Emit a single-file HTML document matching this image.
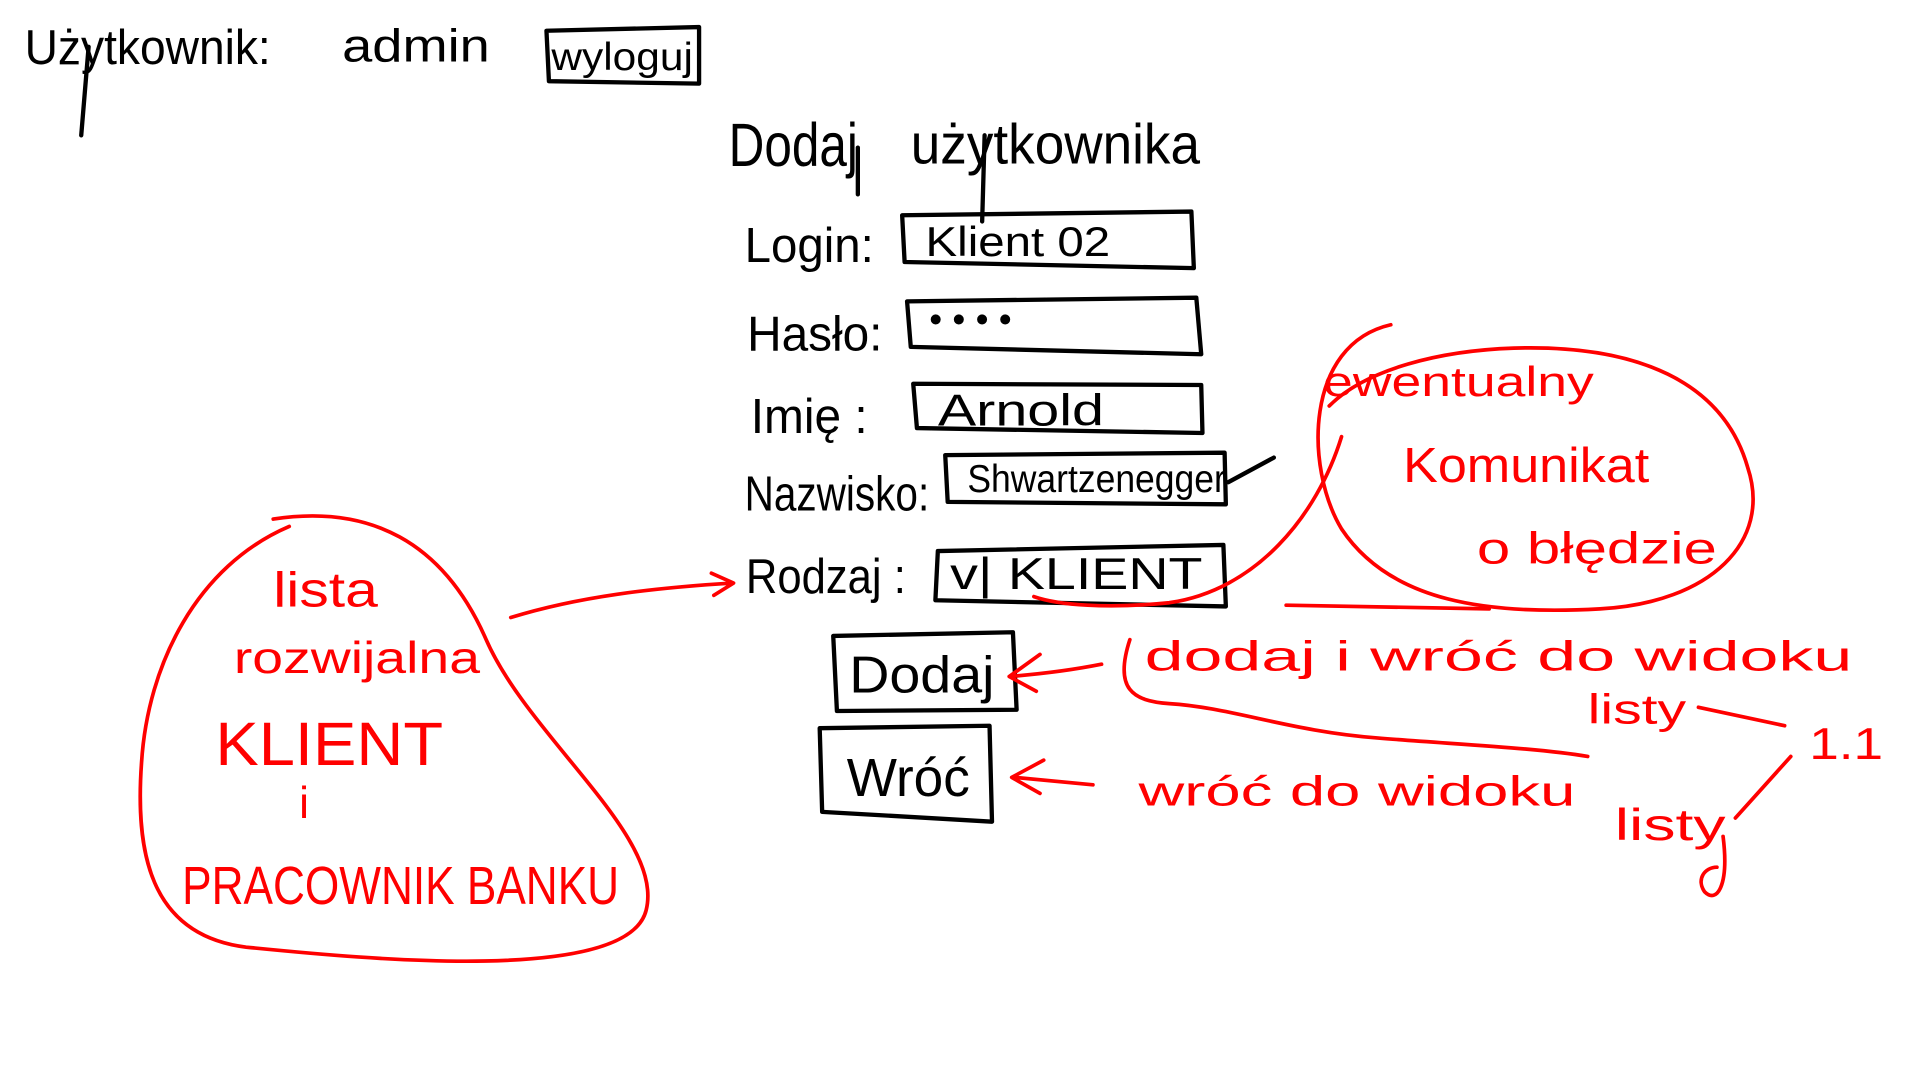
<!DOCTYPE html>
<html><head><meta charset="utf-8"><style>
html,body{margin:0;padding:0;background:#fff;width:1920px;height:1080px;overflow:hidden}
svg{display:block}
text{font-family:"Liberation Sans Narrow","Liberation Sans",sans-serif}
.k{fill:#000}.r{fill:#f00}
.ks{fill:none;stroke:#000;stroke-width:3.5;stroke-linecap:round;stroke-linejoin:round}
.rs{fill:none;stroke:#f00;stroke-width:3;stroke-linecap:round;stroke-linejoin:round}
</style></head><body>
<svg width="1920" height="1080" viewBox="0 0 1560 878" preserveAspectRatio="none">
<!-- header -->
<text x="20" y="52" class="k" font-size="40" textLength="200" lengthAdjust="spacingAndGlyphs">Użytkownik:</text>
<path class="ks" d="M72 38 L66 110"/>
<text x="278" y="50" class="k" font-size="38" textLength="120" lengthAdjust="spacingAndGlyphs">admin</text>
<path class="ks" d="M444 25 L568 22 L568 68 L446 66 Z"/>
<text x="448" y="57" class="k" font-size="32" textLength="115" lengthAdjust="spacingAndGlyphs">wyloguj</text>
<!-- title -->
<text x="592" y="135" class="k" font-size="50" textLength="105" lengthAdjust="spacingAndGlyphs">Dodaj</text>
<path class="ks" d="M697 120 L697 158"/>
<text x="740" y="133" class="k" font-size="46" textLength="235" lengthAdjust="spacingAndGlyphs">użytkownika</text>
<path class="ks" d="M800 110 L798 180"/>
<!-- fields -->
<text x="605" y="213" class="k" font-size="40" textLength="105" lengthAdjust="spacingAndGlyphs">Login:</text>
<path class="ks" d="M733 175 L968 172 L970 218 L735 213 Z"/>
<text x="752" y="208" class="k" font-size="34" textLength="150" lengthAdjust="spacingAndGlyphs">Klient 02</text>
<text x="607" y="285" class="k" font-size="40" textLength="110" lengthAdjust="spacingAndGlyphs">Hasło:</text>
<path class="ks" d="M737 245 L972 242 L976 288 L740 282 Z"/>
<text x="755" y="270" class="k" font-size="30">• • • •</text>
<text x="610" y="352" class="k" font-size="40" textLength="95" lengthAdjust="spacingAndGlyphs">Imię :</text>
<path class="ks" d="M742 312 L976 313 L977 352 L745 348 Z"/>
<text x="762" y="346" class="k" font-size="36" textLength="135" lengthAdjust="spacingAndGlyphs">Arnold</text>
<text x="605" y="415" class="k" font-size="40" textLength="150" lengthAdjust="spacingAndGlyphs">Nazwisko:</text>
<path class="ks" d="M768 370 L995 368 L996 410 L770 408 Z"/>
<text x="786" y="400" class="k" font-size="32" textLength="210" lengthAdjust="spacingAndGlyphs">Shwartzenegger</text>
<path class="ks" d="M998 392 L1035 372"/>
<text x="606" y="482" class="k" font-size="40" textLength="130" lengthAdjust="spacingAndGlyphs">Rodzaj :</text>
<path class="ks" d="M762 448 L994 443 L996 493 L760 488 Z"/>
<text x="772" y="479" class="k" font-size="36" textLength="205" lengthAdjust="spacingAndGlyphs">v| KLIENT</text>
<!-- buttons -->
<path class="ks" d="M677 517 L823 514 L826 577 L680 578 Z"/>
<text x="690" y="563" class="k" font-size="42" textLength="118" lengthAdjust="spacingAndGlyphs">Dodaj</text>
<path class="ks" d="M666 592 L804 590 L806 668 L668 660 Z"/>
<text x="688" y="647" class="k" font-size="44" textLength="100" lengthAdjust="spacingAndGlyphs">Wróć</text>
<!-- left bubble -->
<path class="rs" d="M222 422 C300 410 360 440 395 520 C430 600 540 680 525 740 C510 800 300 780 200 770 C120 760 110 690 115 620 C120 540 160 460 235 428"/>
<text x="222" y="493" class="r" font-size="40" textLength="85" lengthAdjust="spacingAndGlyphs">lista</text>
<text x="190" y="547" class="r" font-size="36" textLength="200" lengthAdjust="spacingAndGlyphs">rozwijalna</text>
<text x="175" y="622" class="r" font-size="50" textLength="185" lengthAdjust="spacingAndGlyphs">KLIENT</text>
<text x="243" y="665" class="r" font-size="36">i</text>
<text x="148" y="735" class="r" font-size="44" textLength="355" lengthAdjust="spacingAndGlyphs">PRACOWNIK BANKU</text>
<path class="rs" d="M415 502 C470 485 530 478 595 474 M578 466 L596 474 L580 484"/>
<!-- right bubble -->
<path class="rs" d="M1130 264 C1060 280 1060 380 1090 430 C1130 490 1210 500 1300 495 C1390 490 1440 440 1420 380 C1400 310 1330 280 1230 283 C1170 285 1110 300 1080 330"/>
<text x="1075" y="322" class="r" font-size="34" textLength="220" lengthAdjust="spacingAndGlyphs">ewentualny</text>
<text x="1140" y="392" class="r" font-size="40" textLength="200" lengthAdjust="spacingAndGlyphs">Komunikat</text>
<text x="1200" y="458" class="r" font-size="36" textLength="195" lengthAdjust="spacingAndGlyphs">o  błędzie</text>
<path class="rs" d="M1090 355 C1070 420 1020 480 950 490 C900 495 860 492 840 485"/>
<!-- annotations -->
<path class="rs" d="M895 540 C870 545 845 548 820 550 M845 532 L820 550 L842 562"/>
<path class="rs" d="M918 520 C905 560 920 570 950 572 C1000 575 1050 595 1120 600 C1180 605 1250 608 1290 615"/>
<path class="rs" d="M1045 492 L1210 495"/>
<text x="930" y="545" class="r" font-size="34" textLength="575" lengthAdjust="spacingAndGlyphs">dodaj  i  wróć  do  widoku</text>
<text x="1290" y="588" class="r" font-size="34" textLength="80" lengthAdjust="spacingAndGlyphs">listy</text>
<path class="rs" d="M1380 575 L1450 590"/>
<text x="1470" y="617" class="r" font-size="36" textLength="60" lengthAdjust="spacingAndGlyphs">1.1</text>
<path class="rs" d="M888 638 L825 632 M848 618 L822 632 L845 645"/>
<text x="925" y="655" class="r" font-size="34" textLength="355" lengthAdjust="spacingAndGlyphs">wróć   do  widoku</text>
<text x="1312" y="683" class="r" font-size="36" textLength="90" lengthAdjust="spacingAndGlyphs">listy</text>
<path class="rs" d="M1410 665 L1455 615 M1400 680 C1405 720 1395 735 1385 725 C1378 715 1385 705 1395 705"/>
</svg>
</body></html>
